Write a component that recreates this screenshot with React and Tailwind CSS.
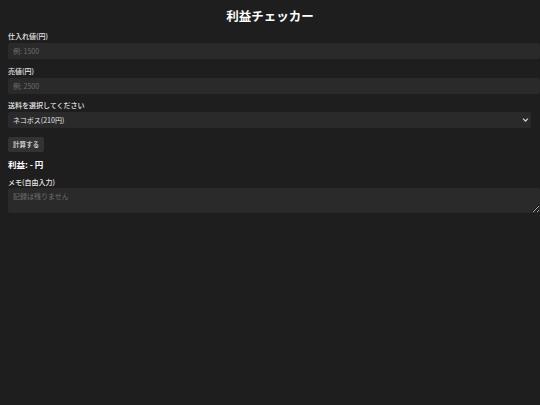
import React from "react";

export default function App() {
  return (
    <div className="min-h-[405px] w-[540px] overflow-hidden bg-[#1e1e1e] text-[#e6e6e6] pl-2 pt-[6px] font-['Noto_Sans_CJK_JP',sans-serif]">
      <h1 className="w-[524px] text-center text-[12.5px] leading-[20px] font-bold text-white">
        利益チェッカー
      </h1>

      <label className="block mt-[6px] text-[7px] leading-[9px] font-medium">仕入れ値(円)</label>
      <input
        className="mt-[2px] block h-[16px] w-[532px] rounded-[2px] bg-[#2a2a2a] px-[5px] text-[7px] text-[#e6e6e6] placeholder:text-[#6f6f6f] outline-none"
        placeholder="例: 1500"
      />

      <label className="block mt-[8px] text-[7px] leading-[9px] font-medium">売値(円)</label>
      <input
        className="mt-[2px] block h-[16px] w-[532px] rounded-[2px] bg-[#2a2a2a] px-[5px] text-[7px] text-[#e6e6e6] placeholder:text-[#6f6f6f] outline-none"
        placeholder="例: 2500"
      />

      <label className="block mt-[7px] text-[7px] leading-[9px] font-medium">送料を選択してください</label>
      <div className="relative mt-[2px] h-[16px] w-[523px] rounded-[2px] bg-[#2a2a2a] flex items-center pl-[5px] text-[7px] text-[#e6e6e6]">
        <span>ネコポス(210円)</span>
        <svg
          className="absolute right-[2px] top-[5px]"
          width="7"
          height="6"
          viewBox="0 0 10 8"
          fill="none"
          stroke="#d0d0d0"
          strokeWidth="1.8"
        >
          <path d="M1.5 2 L5 5.5 L8.5 2" />
        </svg>
      </div>

      <button className="mt-[9px] block h-[15px] rounded-[2px] bg-[#333333] px-[5px] text-[6.5px] leading-[15px] font-medium text-[#e6e6e6]">
        計算する
      </button>

      <div className="mt-[6px] text-[8.5px] leading-[12px] font-bold text-white">利益: - 円</div>

      <label className="block mt-[8px] text-[7px] leading-[9px] font-medium">メモ(自由入力)</label>
      <textarea
        className="mt-[1px] block h-[25px] w-[532px] resize rounded-[2px] bg-[#2a2a2a] px-[5px] pt-[4px] text-[7px] leading-[9px] text-[#e6e6e6] placeholder:text-[#6f6f6f] outline-none"
        placeholder="記録は残りません"
      />
    </div>
  );
}
